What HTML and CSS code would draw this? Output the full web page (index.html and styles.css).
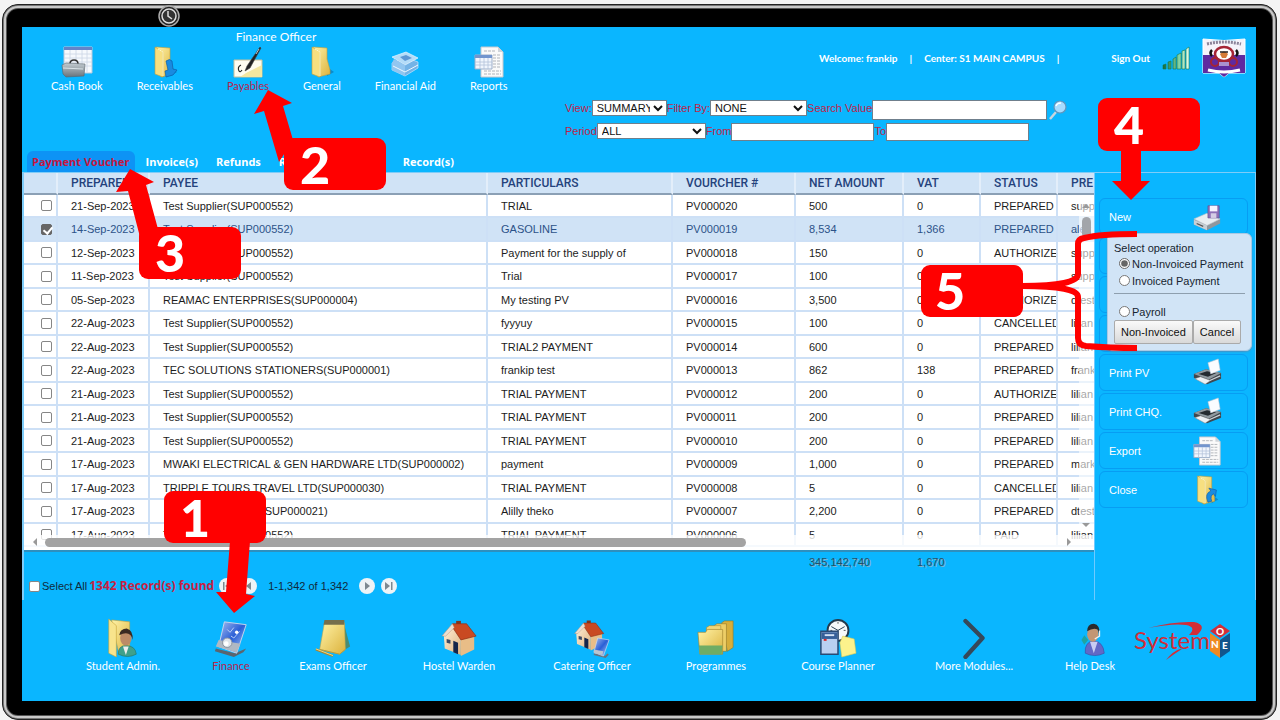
FILE: index.html
```html
<!DOCTYPE html>
<html lang="en">
<head>
<meta charset="utf-8">
<title>Finance Officer - Payables</title>
<link rel="stylesheet" href="styles.css">
</head>
<body>
<svg class="defs" aria-hidden="true">
  <defs>
    <linearGradient id="gold" x1="0" x2="1" y1="0" y2="1"><stop offset="0" stop-color="#fff3a8"/><stop offset="1" stop-color="#dcb23c"/></linearGradient>
    <linearGradient id="steel" x1="0" x2="0" y1="0" y2="1"><stop offset="0" stop-color="#c3ccd2"/><stop offset="1" stop-color="#68747c"/></linearGradient>
    <linearGradient id="blue" x1="0" x2="1" y1="0" y2="1"><stop offset="0" stop-color="#a9bff0"/><stop offset=".5" stop-color="#2a5fd6"/><stop offset="1" stop-color="#c2d6f5"/></linearGradient>
    <linearGradient id="wall" x1="0" x2="1" y1="0" y2="1"><stop offset="0" stop-color="#fff2dc"/><stop offset="1" stop-color="#dfb27e"/></linearGradient>
    <linearGradient id="bar" x1="0" x2="1"><stop offset="0" stop-color="#136b3c"/><stop offset=".6" stop-color="#7fd0a0"/><stop offset="1" stop-color="#e6fff0"/></linearGradient>
    <symbol id="i-folder" viewBox="0 0 32 32">
      <path d="M21 21l7 5-7 4z" fill="#0d6ea8" opacity=".6"/>
      <path d="M7 1l14 1v11l3 11v4l-12 3z" fill="url(#gold)" stroke="#c79f35" stroke-width=".6"/>
      <path d="M6 1l8 5v25l-8-3z" fill="#f7df80" stroke="#c79f35" stroke-width=".6"/>
      <path d="M9 3l5 3v24" fill="none" stroke="#fff8c8" stroke-width="1"/>
    </symbol>
    <symbol id="i-receive" viewBox="0 0 32 32">
      <use href="#i-folder"/>
      <path d="M17 15q4-3 6 0l1 8 4 1-4 5-7 2-1-6 3-1z" fill="#198be0" stroke="#0a5fae" stroke-width=".7"/>
    </symbol>
    <symbol id="i-close" viewBox="0 0 32 32">
      <use href="#i-folder"/>
      <path d="M17 29q-4-9 3-12l-2-3 8 2-1 7-2-3q-4 2-2 8z" fill="#198be0" stroke="#0a5fae" stroke-width=".7"/>
    </symbol>
    <symbol id="i-cash" viewBox="0 0 32 32">
      <path d="M3 1h28v26H3z" fill="#f6f9fd" stroke="#b9c8dc"/>
      <path d="M3 1h28v3H3z" fill="#6483c8"/>
      <path d="M3 8h28M3 12h28M3 16h28M3 20h28M9 4v22M15 4v22M21 4v22M26 4v22" stroke="#ccd6e4" stroke-width=".8"/>
      <path d="M9 18q0-4 4-4t4 4" fill="none" stroke="#333" stroke-width="1.6"/>
      <path d="M1 19l4-2 19 1-1 12-18 1-3-3z" fill="url(#steel)" stroke="#59656d" stroke-width=".6"/>
      <path d="M2 22l20 1" stroke="#dbe3e8"/>
    </symbol>
    <symbol id="i-pay" viewBox="0 0 32 32">
      <path d="M2 14h28v17H2z" fill="#fffdf0" stroke="#c9c09a"/>
      <path d="M14 27l16-8v12H8z" fill="#f5e7a0"/>
      <path d="M9 19q-4 2-2 6 1 2 3-1" fill="none" stroke="#222" stroke-width="1.1"/>
      <path d="M13 25l2-5L28 1l1 1-11 20z" fill="#222" stroke="#444" stroke-width=".6"/>
      <path d="M24 8l3-5" stroke="#b7c2cc"/>
    </symbol>
    <symbol id="i-aid" viewBox="0 0 32 32">
      <path d="M3 17l13-6 13 5v6l-13 8-13-6z" fill="#74b3e6" stroke="#c5e3fb" stroke-width=".7"/>
      <path d="M3 11l14-5 12 6-13 7z" fill="#b4dcf8" stroke="#e6f5ff" stroke-width=".7"/>
      <path d="M5 13l11 6v11l-13-6v-7z" fill="#92c6f0"/><path d="M4 20l12 6 13-7" fill="none" stroke="#eef8ff"/>
      <path d="M11 11l6-2 6 3-7 3z" fill="#5d97d4"/>
    </symbol>
    <symbol id="i-report" viewBox="0 0 32 32">
      <path d="M8 1h17l5 5v25H8z" fill="#fafafa" stroke="#c4c8ce"/><path d="M25 1v5h5z" fill="#cfd4da"/>
      <path d="M11 5h12M20 9h8M20 12h8M20 15h8M20 18h8M20 21h8M11 25h17M11 28h17" stroke="#b0b4ba" stroke-dasharray="3 1"/>
      <path d="M2 9h17v14H2z" fill="#f1f6fd" stroke="#9daec8"/><path d="M2 9h17v3H2z" fill="#7295ce"/>
      <path d="M2 16h17M2 19h17M7 12v11M11 12v11M15 12v11" stroke="#b3c2d9" stroke-width=".8"/>
    </symbol>
    <symbol id="i-printer" viewBox="0 0 32 32">
      <path d="M2 17l13-5 16 4v6L16 28 2 21z" fill="#40474e"/>
      <path d="M2 17l13-5 16 4-13 7z" fill="#8f999f"/><path d="M7 17l9-3 10 2-9 4z" fill="#242a2f"/>
      <path d="M17 5l11-4 2 12-10 4z" fill="#fafcff" stroke="#b9c4d0" stroke-width=".6"/>
      <path d="M3 22l6-2 11 4-6 4z" fill="#edf1f4" stroke="#777" stroke-width=".5"/><path d="M19 24l11-5" stroke="#ccd3d8" stroke-width="1.4"/>
    </symbol>
    <symbol id="i-disk" viewBox="0 0 32 32">
      <path d="M2 19l14-6 14 5v5L16 30 2 24z" fill="#8f979e"/><path d="M2 18l14-6 14 6-14 7z" fill="#e8edf1" stroke="#b9c1c7" stroke-width=".6"/>
      <path d="M2 19l14 6v5L2 24z" fill="#c8cfd5"/><path d="M5 23l7 3" stroke="#555" stroke-width="1.2"/>
      <path d="M17 4h12v13H17z" fill="#8d70b8" stroke="#66508f" stroke-width=".7"/><path d="M19 4h8v6h-8z" fill="#f8f4ff"/><path d="M20 12h6v5h-6z" fill="#d5cde5"/>
    </symbol>
    <symbol id="i-student" viewBox="0 0 40 40">
      <path d="M8 1l19 2v28l-11 7z" fill="url(#gold)" stroke="#c79f35" stroke-width=".6"/><path d="M5 0l8 7v33l-8-4z" fill="#f8e48c" stroke="#c79f35" stroke-width=".6"/>
      <path d="M15 37q0-9 8-9 10 0 11 9-9 5-19 0z" fill="#3fa08b" stroke="#24705f" stroke-width=".6"/><path d="M20 29l3 9 3-9z" fill="#eee"/>
      <ellipse cx="23" cy="20" rx="6" ry="8" fill="#bd8b66"/><path d="M16 17q1-7 8-7 7 2 6 12-1-7-7-7-3 0-7 2z" fill="#3a2a22"/>
    </symbol>
    <symbol id="i-finance" viewBox="0 0 40 40">
      <path d="M4 31l20 5 12-5-3 4-10 5-20-6z" fill="#5b6570"/><path d="M13 3l23 3-10 30-19-7z" fill="url(#blue)" stroke="#c8d6ec"/>
      <path d="M7 22l23 4-4 9-22-6z" fill="#b0b8c2"/><circle cx="16" cy="25" r="5" fill="#dfe4ea" stroke="#8b949f"/><circle cx="15" cy="26" r="2.5" fill="#fff"/><circle cx="26" cy="14" r="1.8" fill="#fff"/>
      <path d="M16 11l3 3 4-5M20 18l3 2 6-7" stroke="#dbe8ff" fill="none" stroke-width=".8"/>
    </symbol>
    <symbol id="i-exam" viewBox="0 0 40 40">
      <path d="M31 3l7 26-10 6z" fill="#4a8c72"/><path d="M11 4l21 0 1 28-6 5-21-5z" fill="url(#gold)" stroke="#c2a748" stroke-width=".6"/>
      <path d="M11 1h21v5H10z" fill="#766f4c"/><path d="M6 32l21 5 6-5" fill="none" stroke="#b79b3d"/><path d="M2 32l18 7" stroke="#a98532" stroke-width="2.4"/><path d="M2 31.500l18 7" stroke="#f3dc83"/>
    </symbol>
    <symbol id="i-house" viewBox="0 0 40 40">
      <path d="M17 2h5v8h-5z" fill="#7c3522"/><path d="M4 17l9-10 9 14v17L5 31z" fill="url(#wall)"/><path d="M22 20l14-2v14l-14 7z" fill="#e8bd87"/>
      <path d="M13 5l15 0 10 13-16 4-8-12z" fill="#c94a22" stroke="#8d2d12" stroke-width=".7"/><path d="M2 18L13 5l2 4-9 9z" fill="#eadfd2" stroke="#b98e73" stroke-width=".5"/>
      <path d="M14 23l5 2v12l-5-2z" fill="#15264b"/><path d="M7 21l4 1v4l-4-1z" fill="#3c4a63"/>
    </symbol>
    <symbol id="i-catering" viewBox="0 0 40 40">
      <use href="#i-house" width="34" height="34"/><path d="M22 37l12 3 3-3" stroke="#69737f" stroke-width="2" fill="none"/><path d="M26 20l12 2-6 17-10-4z" fill="url(#blue)" stroke="#cfdcf0" stroke-width=".7"/><path d="M22 32l10 2-1 4-9-2z" fill="#bbc4ce"/>
    </symbol>
    <symbol id="i-programmes" viewBox="0 0 40 40">
      <path d="M26 4l3-2h9v28l-6 4z" fill="#d7ae3b" stroke="#907523" stroke-width=".6"/><path d="M18 7l3-2h10v29H18z" fill="#edce67" stroke="#907523" stroke-width=".6"/><path d="M10 9l3-2h12v29H10z" fill="#f0d678" stroke="#a58630" stroke-width=".6"/>
      <path d="M1 14h8l2-3h16v26H3z" fill="url(#gold)" stroke="#a58630" stroke-width=".7"/><path d="M2 28h25l-1 9H3z" fill="#6fac65"/>
    </symbol>
    <symbol id="i-course" viewBox="0 0 40 40">
      <circle cx="20" cy="12" r="11" fill="#f7f9fa" stroke="#253a4c" stroke-width="2"/><path d="M20 12l-7-4M20 12l7-4M20 12v9" stroke="#253a4c" fill="none"/><path d="M12 12h2M26 12h2M20 3v2" stroke="#555"/>
      <path d="M2 13h18v24H2z" fill="#b9d0f1" stroke="#294a75" stroke-width="1.600"/><path d="M3 14h16v7H3z" fill="#365f99"/><path d="M6 16h10v2H6z" fill="#d3e1f5"/><path d="M5 22h3" stroke="#d22" stroke-width="2"/>
      <path d="M25 18l12 3 2 15-15 4-2-15z" fill="#fcf28c" stroke="#d9c954" stroke-width=".6"/>
    </symbol>
    <symbol id="i-more" viewBox="0 0 40 40"><path d="M11 2l18 18-18 20" fill="none" stroke="#36485a" stroke-width="4.500" stroke-linecap="round" stroke-linejoin="round"/></symbol>
    <symbol id="i-help" viewBox="0 0 40 40">
      <path d="M15 36q-1-12 9-13 10 1 11 13-10 5-20 0z" fill="#6268c6" stroke="#3e4499" stroke-width=".6"/><path d="M20 24l4 12 4-12z" fill="#c9ccf2"/>
      <ellipse cx="23" cy="16" rx="6" ry="8" fill="#c39674"/><path d="M17 13q0-8 7-8 7 1 6 12l-2-6q-5-2-11 2z" fill="#2b2a2c"/><path d="M30 12v6l-5 3" stroke="#eee" stroke-width="1.400" fill="none"/><path d="M14 17l4 5-4 5-3-5z" fill="#1fa4a0"/>
    </symbol>
  </defs>
</svg>

<div class="monitor">
  <svg class="camera" viewBox="0 0 22 22" aria-hidden="true"><circle cx="11" cy="11" r="10" fill="#222" stroke="#aaa" stroke-width="1.500"/><circle cx="11" cy="11" r="7" fill="#333" stroke="#ddd" stroke-width="1.500"/><path d="M10 6v5l4 3" fill="none" stroke="#ddd" stroke-width="1.500"/></svg>
  <div class="screen">
    <header class="top">
      <nav class="sections" aria-label="Finance sections">
        <h1>Finance Officer</h1>
        <ul>
          <li><a href="#"><svg><use href="#i-cash"/></svg>Cash Book</a></li>
          <li><a href="#"><svg><use href="#i-receive"/></svg>Receivables</a></li>
          <li><a href="#" class="current"><svg><use href="#i-pay"/></svg>Payables</a></li>
          <li><a href="#"><svg><use href="#i-folder"/></svg>General</a></li>
          <li><a href="#"><svg><use href="#i-aid"/></svg>Financial Aid</a></li>
          <li><a href="#"><svg><use href="#i-report"/></svg>Reports</a></li>
        </ul>
      </nav>
      <div class="tools">
        <div class="account">
          <span>Welcome: frankip</span><span>|</span><span>Center: S1 MAIN CAMPUS</span><span>|</span>
          <a class="signout" href="#">Sign Out</a>
          <svg class="signal" viewBox="0 0 28 24" aria-hidden="true"><g fill="url(#bar)" stroke="#16794a" stroke-width=".6"><path d="M1 19l3-1v5H1zM6 16l3-1v8H6zM11 13l3-2v12h-3zM15 9l4-2v16h-4zM20 5l3-1v19h-3zM24 3l3-2v22h-3z"/></g></svg>
          <svg class="crest" viewBox="0 0 44 40" aria-hidden="true">
            <path d="M1 1q21 3 42 0v34H27l-5 4-5-4H1z" fill="#f5f3fa" stroke="#fff"/><path d="M1 17h42v18H27l-5 4-5-4H1z" fill="#5f2aa0"/>
            <path d="M5 6q17-4 34 0" fill="none" stroke="#8b8399" stroke-width="3" stroke-dasharray="2 1"/>
            <ellipse cx="22" cy="16" rx="9" ry="7" fill="#fff" stroke="#a52435" stroke-width="2.500"/><path d="M18 16q4-5 8 0l-2 4h-4z" fill="#d47c38"/><path d="M18 14h8" stroke="#222" stroke-width="1.500"/>
            <path d="M10 12q-3 3 0 6M34 12q3 3 0 6" fill="none" stroke="#111" stroke-width="2.500"/><circle cx="13" cy="24" r="4" fill="none" stroke="#a52435" stroke-width="2"/><circle cx="31" cy="24" r="4" fill="none" stroke="#a52435" stroke-width="2"/>
            <path d="M17 24h10v4H17z" fill="#a991cf"/><path d="M6 32q16 4 32 0" stroke="#fff" stroke-width="3" fill="none"/>
          </svg>
        </div>
        <form class="filters">
          <div class="line">
            <label for="view">View:</label><select id="view" class="w-view"><option>SUMMARY</option></select>
            <label for="filter">Filter By:</label><select id="filter" class="w-filter"><option>NONE</option></select>
            <label for="search">Search Value</label><input id="search" class="w-search" type="text">
            <button class="find" type="submit" aria-label="Search"><svg viewBox="0 0 20 20"><path d="M2 19l6-7" stroke="#c8d5df" stroke-width="2.500"/><circle cx="12" cy="7" r="6" fill="#a7dcff" stroke="#6296bd" stroke-width="1.200"/><path d="M8 6q1-3 5-3" stroke="#fff" fill="none" stroke-width="1.500"/></svg></button>
          </div>
          <div class="line">
            <label for="period">Period</label><select id="period" class="w-period"><option>ALL</option></select>
            <label for="from">From</label><input id="from" type="text">
            <label for="to">To</label><input id="to" type="text">
          </div>
        </form>
      </div>
    </header>

    <nav class="tabs" aria-label="Payables">
      <a href="#" class="active">Payment Voucher</a><a href="#">Invoice(s)</a><a href="#">Refunds</a><a href="#" class="wide">R</a><a href="#">Record(s)</a>
    </nav>

    <main class="work">
      <div class="data">
        <div class="scroller">
          <table>
            <colgroup><col class="c-check"><col class="c-date"><col><col class="c-part"><col class="c-num"><col class="c-net"><col class="c-vat"><col class="c-status"><col class="c-by"></colgroup>
            <thead><tr><th></th><th>PREPARED</th><th>PAYEE</th><th>PARTICULARS</th><th>VOURCHER #</th><th>NET AMOUNT</th><th>VAT</th><th>STATUS</th><th>PRE</th></tr></thead>
            <tbody>
              <tr><td><input type="checkbox" aria-label="PV000020"></td><td>21-Sep-2023</td><td>Test Supplier(SUP000552)</td><td>TRIAL</td><td>PV000020</td><td>500</td><td>0</td><td>PREPARED</td><td>supp</td></tr>
              <tr class="selected"><td><input type="checkbox" aria-label="PV000019" checked></td><td>14-Sep-2023</td><td>Test Supplier(SUP000552)</td><td>GASOLINE</td><td>PV000019</td><td>8,534</td><td>1,366</td><td>PREPARED</td><td>alex</td></tr>
              <tr><td><input type="checkbox" aria-label="PV000018"></td><td>12-Sep-2023</td><td>Test Supplier(SUP000552)</td><td>Payment for the supply of</td><td>PV000018</td><td>150</td><td>0</td><td>AUTHORIZE</td><td>supp</td></tr>
              <tr><td><input type="checkbox" aria-label="PV000017"></td><td>11-Sep-2023</td><td>Test Supplier(SUP000552)</td><td>Trial</td><td>PV000017</td><td>100</td><td>0</td><td></td><td>supp</td></tr>
              <tr><td><input type="checkbox" aria-label="PV000016"></td><td>05-Sep-2023</td><td>REAMAC ENTERPRISES(SUP000004)</td><td>My testing PV</td><td>PV000016</td><td>3,500</td><td>0</td><td>AUTHORIZE</td><td>dtest</td></tr>
              <tr><td><input type="checkbox" aria-label="PV000015"></td><td>22-Aug-2023</td><td>Test Supplier(SUP000552)</td><td>fyyyuy</td><td>PV000015</td><td>100</td><td>0</td><td>CANCELLED</td><td>lilian</td></tr>
              <tr><td><input type="checkbox" aria-label="PV000014"></td><td>22-Aug-2023</td><td>Test Supplier(SUP000552)</td><td>TRIAL2 PAYMENT</td><td>PV000014</td><td>600</td><td>0</td><td>PREPARED</td><td>lilian</td></tr>
              <tr><td><input type="checkbox" aria-label="PV000013"></td><td>22-Aug-2023</td><td>TEC SOLUTIONS STATIONERS(SUP000001)</td><td>frankip test</td><td>PV000013</td><td>862</td><td>138</td><td>PREPARED</td><td>frank</td></tr>
              <tr><td><input type="checkbox" aria-label="PV000012"></td><td>21-Aug-2023</td><td>Test Supplier(SUP000552)</td><td>TRIAL PAYMENT</td><td>PV000012</td><td>200</td><td>0</td><td>AUTHORIZE</td><td>lilian</td></tr>
              <tr><td><input type="checkbox" aria-label="PV000011"></td><td>21-Aug-2023</td><td>Test Supplier(SUP000552)</td><td>TRIAL PAYMENT</td><td>PV000011</td><td>200</td><td>0</td><td>PREPARED</td><td>lilian</td></tr>
              <tr><td><input type="checkbox" aria-label="PV000010"></td><td>21-Aug-2023</td><td>Test Supplier(SUP000552)</td><td>TRIAL PAYMENT</td><td>PV000010</td><td>200</td><td>0</td><td>PREPARED</td><td>lilian</td></tr>
              <tr><td><input type="checkbox" aria-label="PV000009"></td><td>17-Aug-2023</td><td>MWAKI ELECTRICAL &amp; GEN HARDWARE LTD(SUP000002)</td><td>payment</td><td>PV000009</td><td>1,000</td><td>0</td><td>PREPARED</td><td>mark</td></tr>
              <tr><td><input type="checkbox" aria-label="PV000008"></td><td>17-Aug-2023</td><td>TRIPPLE TOURS TRAVEL LTD(SUP000030)</td><td>TRIAL PAYMENT</td><td>PV000008</td><td>5</td><td>0</td><td>CANCELLED</td><td>lilian</td></tr>
              <tr><td><input type="checkbox" aria-label="PV000007"></td><td>17-Aug-2023</td><td><span class="covered"></span>(SUP000021)</td><td>Alilly theko</td><td>PV000007</td><td>2,200</td><td>0</td><td>PREPARED</td><td>dtest</td></tr>
              <tr><td><input type="checkbox" aria-label="PV000006"></td><td>17-Aug-2023</td><td>Test Supplier(SUP000552)</td><td>TRIAL PAYMENT</td><td>PV000006</td><td>5</td><td>0</td><td>PAID</td><td>lilian</td></tr>
            </tbody>
          </table>
          <div class="vbar" aria-hidden="true"><i class="arrow up"></i><b></b><i class="arrow down"></i></div>
          <div class="hbar" aria-hidden="true"><i class="arrow left"></i><b></b><i class="arrow right"></i></div>
        </div>
        <div class="totals"><span class="net">345,142,740</span><span class="vat">1,670</span></div>
        <div class="pager">
          <input type="checkbox" id="all"><label for="all">Select All</label>
          <strong>1342 Record(s) found</strong>
          <button type="button" aria-label="First page"><svg viewBox="0 0 16 16"><path d="M12 4v8L6 8zM4 4h1.500v8H4z"/></svg></button>
          <button type="button" aria-label="Previous page"><svg viewBox="0 0 16 16"><path d="M10 4v8L5 8z"/></svg></button>
          <span class="range">1-1,342 of 1,342</span>
          <button type="button" aria-label="Next page"><svg viewBox="0 0 16 16"><path d="M6 4v8l5-4z"/></svg></button>
          <button type="button" aria-label="Last page"><svg viewBox="0 0 16 16"><path d="M4 4v8l5-4zM10 4h1.500v8H10z"/></svg></button>
        </div>
      </div>
      <aside class="actions">
        <button type="button">New<svg><use href="#i-disk"/></svg></button>
        <div class="blank"></div><div class="blank"></div><div class="blank"></div>
        <button type="button">Print PV<svg><use href="#i-printer"/></svg></button>
        <button type="button">Print CHQ.<svg><use href="#i-printer"/></svg></button>
        <button type="button">Export<svg><use href="#i-report"/></svg></button>
        <button type="button">Close<svg><use href="#i-close"/></svg></button>
        <form class="popup">
          <p>Select operation</p>
          <label><input type="radio" name="op" checked>Non-Invoiced Payment</label>
          <label><input type="radio" name="op">Invoiced Payment</label>
          <hr>
          <label><input type="radio" name="op">Payroll</label>
          <div class="buttons"><button type="button">Non-Invoiced</button><button type="button">Cancel</button></div>
        </form>
      </aside>
    </main>

    <footer class="modules">
      <a href="#"><svg><use href="#i-student"/></svg>Student Admin.</a>
      <a href="#" class="current"><svg><use href="#i-finance"/></svg>Finance</a>
      <a href="#"><svg><use href="#i-exam"/></svg>Exams Officer</a>
      <a href="#"><svg><use href="#i-house"/></svg>Hostel Warden</a>
      <a href="#"><svg><use href="#i-catering"/></svg>Catering Officer</a>
      <a href="#"><svg><use href="#i-programmes"/></svg>Programmes</a>
      <a href="#"><svg><use href="#i-course"/></svg>Course Planner</a>
      <a href="#"><svg><use href="#i-more"/></svg>More Modules...</a>
      <a href="#"><svg><use href="#i-help"/></svg>Help Desk</a>
      <svg class="logo" viewBox="0 0 98 42" role="img" aria-label="System One">
        <path d="M14 7Q40 0 60 1q14 3 3 13h-8q8-8-3-10-12-2-38 3z" fill="#d12e39"/>
        <text x="0" y="28">System</text>
        <path d="M48 28q-8 5-16 11 7-9 14-11z" fill="#d12e39"/>
        <path d="M86 3l10 7-10 7-10-7z" fill="#d12e39"/><path d="M76 12l10 7v18l-10-7z" fill="#ef8a22"/><path d="M96 12l-10 7v18l10-7z" fill="#12558c"/>
        <g class="cube"><text x="82" y="14">O</text><text x="77" y="27">N</text><text x="88" y="28">E</text></g>
      </svg>
    </footer>
  </div>
</div>

<svg class="callouts" viewBox="0 0 1280 720">
  <g fill="#f00">
    <path d="M268 90l24 13-9 3 10 34-14 22-15-51-10 3z"/>
    <path d="M130 169l24 13-8 3 12 44-18 8-12-46-12 1z"/>
    <path d="M230 541h20l-4 53 9 2-21 17-18-21h10z"/>
    <path d="M1121 149h20v32h9l-19 19-19-19h9z"/>
    <rect x="284" y="138" width="102" height="52" rx="9"/><rect x="139" y="227" width="102" height="52" rx="9"/>
    <rect x="164" y="491" width="102" height="52" rx="9"/><rect x="1098" y="98" width="102" height="53" rx="9"/><rect x="921" y="265" width="102" height="52" rx="9"/>
  </g>
  <path d="M1137 234Q1100 234 1084 238Q1078 239 1078 244V274Q1078 286 1022 286Q1078 286 1078 297V338Q1078 345 1086 346Q1110 348 1137 348" fill="none" stroke="#f00" stroke-width="6"/>
  <g class="numbers"><text x="300" y="184">2</text><text x="155" y="272">3</text><text x="180" y="537">1</text><text x="1114" y="144">4</text><text x="935" y="310">5</text></g>
</svg>
</body>
</html>
```

FILE: styles.css
```css
* { box-sizing: border-box; }
body {
  margin: 0;
  background: #f4f4f4;
  font: 11px/16px "Liberation Sans", Arial, sans-serif;
  position: relative;
  overflow: hidden;
}
a { color: inherit; text-decoration: none; }
.defs { position: absolute; width: 0; height: 0; }

.monitor {
  position: relative;
  margin: 4px 3px 0 2px;
  padding: 22px 20px 18px 19px;
  min-height: calc(100vh - 4px);
  display: flex;
  background: #000;
  border: 1px solid #222;
  border-radius: 16px;
  box-shadow: inset 0 0 0 1px #777, inset 0 0 0 3px #c9c9c9, inset 0 0 0 4px #555;
}
.camera { position: absolute; left: 155px; top: 0; width: 22px; height: 22px; }
.screen { flex: 1; min-width: 0; display: flex; flex-direction: column; background: #0ab6ff; }

.top { display: flex; height: 124px; color: #fff; }
.sections { padding: 2px 0 0 29px; width: 543px; font: 11px/14px Lato, sans-serif; }
.sections h1 { margin: 0; width: 450px; text-align: center; font-size: 12px; font-weight: 400; line-height: 16px; }
.sections ul { margin: 0; padding: 0; list-style: none; display: flex; gap: 34px; }
.sections a, .modules a { display: flex; flex-direction: column; align-items: center; white-space: nowrap; }
.sections svg { width: 32px; height: 34px; }
.current { color: #b8234e; }

.tools { flex: 1; min-width: 0; }
.account { display: flex; align-items: center; justify-content: flex-end; gap: 12px; padding: 10px 10px 0 0; height: 51px; font: 700 10px/14px Lato, sans-serif; white-space: nowrap; }
.signout { margin-left: 40px; }
.signal { width: 28px; height: 24px; }
.crest { width: 44px; height: 40px; }
.filters { padding-top: 22px; display: grid; gap: 3px; color: #c01f48; }
.line { display: flex; align-items: flex-start; white-space: nowrap; }
.filters select, .filters input {
  font: inherit; color: #111; background: #fff; border: 1px solid #6f7f8c; border-radius: 0; padding: 0;
}
.filters select { height: 16px; line-height: 14px; }
.filters input { height: 18px; width: 143px; }
.filters .w-search { width: 175px; height: 20px; }
.w-view { width: 75px; }
.w-filter { width: 97px; }
.w-period { width: 109px; }
.find { background: none; border: 0; padding: 0; width: 22px; height: 20px; }
.find svg { width: 20px; height: 20px; }

.tabs { display: flex; height: 21px; padding-left: 5px; color: #fff; font: 700 11px/21px "Open Sans", "Noto Sans", sans-serif; white-space: nowrap; }
.tabs a { padding: 0 7px 0 11px; }
.tabs a.active { padding: 0 5px; background: #0d93f5; color: #c5163f; border-radius: 6px 6px 0 0; }
.tabs .wide { width: 124px; }

.work { display: flex; border: solid #7fccf8; border-width: 1px 1px 0 2px; }
.data { flex: 1; min-width: 0; }
.scroller { position: relative; overflow: hidden; height: 379px; background: #fff; border-bottom: 2px solid #2e8fbe; }
table { width: 100%; table-layout: fixed; border-collapse: separate; border-spacing: 0; color: #1c1c1c; }
.c-check { width: 34px; }
.c-date { width: 92px; }
.c-part { width: 185px; }
.c-num { width: 123px; }
.c-net { width: 108px; }
.c-vat { width: 77px; }
.c-status { width: 77px; }
.c-by { width: 36px; }
th, td { padding: 0 0 0 13px; text-align: left; white-space: nowrap; overflow: hidden; border-right: 2px solid #cde0f6; border-bottom: 2px solid #cde0f6; }
th { height: 22px; background: #d0e3f6; color: #24427c; font: 500 12px/19px Roboto, sans-serif; border-bottom-color: #8ba0b5; border-right-color: #e3eefa; }
td { height: 23px; line-height: 20px; }
tr:nth-child(even) td { height: 24px; }
td:first-child { padding-left: 17px; }
th:last-child, td:last-child { border-right: 0; }
.selected td { background: #d0e3f6; color: #2c5288; }
.covered { display: inline-block; width: 98px; }
td input, .pager input { display: block; appearance: none; width: 11px; height: 11px; margin: 0; border: 1px solid #868686; border-radius: 2px; background: #fff; }
td input:checked { border-color: #666; background: #666; position: relative; }
td input:checked::after { content: ""; position: absolute; left: 3px; top: 0; width: 4px; height: 7px; border: solid #fff; border-width: 0 2px 2px 0; transform: rotate(40deg); }
.vbar { position: absolute; right: 0; top: 23px; bottom: 17px; width: 15px; background: rgba(255,255,255,.6); }
.vbar b { position: absolute; left: 3px; top: 21px; width: 9px; height: 21px; border-radius: 5px; background: #a2a5aa; }
.hbar { position: absolute; left: 0; right: 0; bottom: 0; height: 15px; background: rgba(255,255,255,.8); }
.hbar b { position: absolute; left: 21px; right: 348px; top: 3px; height: 9px; border-radius: 5px; background: #a3a3a3; }
.arrow { position: absolute; border: 4px solid transparent; }
.up { left: 3px; top: 4px; border-bottom-color: #999; }
.down { left: 3px; bottom: 2px; border-top-color: #999; }
.left { left: 5px; top: 3px; border-right-color: #999; }
.right { right: 19px; top: 3px; border-left-color: #999; }

.totals { display: flex; justify-content: flex-end; height: 20px; line-height: 20px; color: #24506a; text-shadow: 1px 1px 0 #86b6cc; }
.net { width: 108px; }
.vat { width: 177px; }
.pager { display: flex; align-items: center; height: 28px; padding-left: 5px; color: #102a3c; }
.pager label { padding: 0 2px; }
.pager strong { color: #c81f42; font: 700 12px/16px "Open Sans", "Noto Sans", sans-serif; margin-right: 5px; }
.pager button { width: 16px; height: 16px; padding: 0; margin-right: 6px; border: 0; border-radius: 50%; background: #eef3f6; }
.pager button svg { display: block; fill: #7d8890; }
.range { margin: 0 11px 0 5px; }

.actions { position: relative; width: 161px; padding: 25px 7px 0 4px; border-left: 1px solid #6fcaff; display: flex; flex-direction: column; gap: 2px; }
.actions > button, .blank { height: 37px; width: 100%; border: 1px solid #079df3; border-radius: 6px; background: none; }
.actions > button { display: flex; align-items: center; justify-content: space-between; padding: 0 25px 0 9px; color: #fff; font: inherit; }
.actions > button svg { width: 30px; height: 32px; }
.popup { position: absolute; left: 12px; top: 60px; width: 145px; padding: 7px 6px 6px; background: #d1e4f6; border: 1px solid #a9c9e4; border-radius: 0 6px 6px 6px; box-shadow: 0 1px 2px #4b98c4; color: #172430; }
.popup p { margin: 0; line-height: 14px; }
.popup label { display: flex; align-items: center; gap: 2px; height: 17px; padding-left: 5px; white-space: nowrap; }
.popup input { width: 11px; height: 11px; margin: 0; accent-color: #666; }
.popup hr { margin: 4px 0 9px; border: 0; border-top: 1px solid #8e9fae; }
.buttons { display: flex; }
.buttons button { height: 24px; padding: 0 6px; border: 1px solid #aaa; border-radius: 2px; background: linear-gradient(#fafafa, #d9d9d9); color: #111; font: inherit; white-space: nowrap; }

.modules { display: grid; grid-template-columns: 108fr 108fr 96fr 156fr 110fr 138fr 106fr 166fr 66fr 120fr; padding: 17px 13px 0 47px; color: #fff; font: 11px/14px Lato, sans-serif; }
.modules a svg { width: 38px; height: 42px; }
.logo { width: 98px; height: 42px; justify-self: center; margin-top: 4px; }
.logo text { fill: #d12e39; font: 24px Lato, sans-serif; }
.logo .cube text { fill: #fff; font: 900 10px Lato, sans-serif; }

.callouts { position: absolute; left: 0; top: 0; width: 1280px; height: 720px; pointer-events: none; }
.numbers { fill: #fff; font: 900 52px Lato, sans-serif; }
```
